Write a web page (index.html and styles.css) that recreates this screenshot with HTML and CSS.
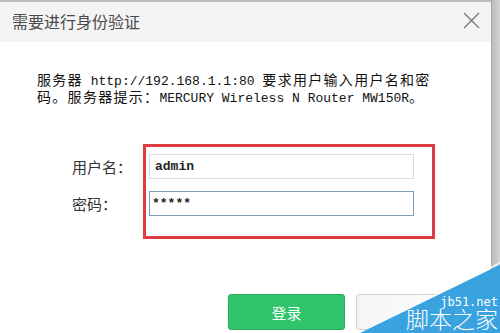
FILE: index.html
```html
<!DOCTYPE html>
<html lang="zh-CN">
<head>
<meta charset="utf-8">
<title>需要进行身份验证</title>
<link rel="stylesheet" href="styles.css">
</head>
<body>
<div class="dialog">
  <div class="header">
    <span class="title">需要进行身份验证</span>
    <svg class="close" width="17" height="17" viewBox="0 0 17 17"><path d="M1 1L16 16M16 1L1 16" stroke="#7a7a7a" stroke-width="1.4" fill="none"/></svg>
  </div>
  <p class="msg">服务器<span class="latin"> http://192.168.1.1:80 </span>要求用户输入用户名和密<br>码。服务器提示：<span class="latin">MERCURY Wireless N Router MW150R</span>。</p>
  <div class="form">
    <div class="labels">
      <div class="label">用户名：</div>
      <div class="label">密码：</div>
    </div>
    <div class="highlight">
      <div class="input">admin</div>
      <div class="input focus">*****</div>
    </div>
  </div>
  <div class="buttons">
    <div class="btn primary">登录</div>
    <div class="btn secondary"></div>
  </div>
</div>
<div class="edge"></div>
<div class="watermark">
  <div class="wm-glow"></div>
  <div class="wm-bg"></div>
  <span class="wm-url">jb51.net</span>
  <span class="wm-name">脚本之家</span>
</div>
</body>
</html>
```
FILE: styles.css
```css
html, body {
  margin: 0;
  padding: 0;
}
body {
  width: 500px;
  height: 333px;
  overflow: hidden;
  position: relative;
  display: flex;
  background: #c6c6c6;
  font-family: "Noto Sans CJK SC", sans-serif;
}
.dialog {
  width: 491px;
  flex: none;
  background: #ffffff;
  border-top: 2px solid #bdbdbd;
  display: flex;
  flex-direction: column;
}
.edge {
  flex: 1;
  border-left: 1px solid #a9a9a9;
  background: linear-gradient(to right, #bcbcbc, #d4d4d4);
}
.header {
  height: 40px;
  background: #f4f4f4;
  display: flex;
  align-items: center;
  justify-content: space-between;
  padding: 0 11px 0 12px;
}
.title {
  font-size: 16px;
  color: #4a4a4a;
  line-height: 20px;
  margin-top: -3px;
}
.close {
  margin-top: -3px;
}
.msg {
  margin: 30px 0 0 37px;
  font-family: "Noto Sans CJK SC", monospace;
  font-size: 14px;
  line-height: 14px;
  letter-spacing: 1.3px;
  color: #111;
}
.latin {
  font-family: "Liberation Mono", monospace;
  font-size: 13px;
  letter-spacing: 0;
}
.form {
  display: flex;
  margin-top: 38px;
  padding-left: 72px;
}
.labels {
  width: 71px;
  padding-top: 10px;
  display: flex;
  flex-direction: column;
  gap: 12px;
}
.label {
  height: 25px;
  line-height: 25px;
  font-size: 15px;
  color: #333;
}
.highlight {
  width: 292px;
  height: 95px;
  box-sizing: border-box;
  border: 3px solid #dc3b40;
  padding: 7px 0 0 3px;
  display: flex;
  flex-direction: column;
  gap: 12px;
}
.input {
  width: 265px;
  height: 25px;
  box-sizing: border-box;
  border: 1px solid #dcdcdc;
  padding-left: 5px;
  font-family: "Liberation Mono", monospace;
  font-size: 13px;
  font-weight: bold;
  line-height: 23px;
  color: #222;
}
.input.focus {
  border-color: #7f9dbd;
  padding-left: 2px;
}
.buttons {
  display: flex;
  justify-content: flex-end;
  gap: 11px;
  padding-right: 18px;
  margin-top: 55px;
}
.btn {
  width: 117px;
  height: 36px;
  box-sizing: border-box;
  border-radius: 3px;
  display: flex;
  align-items: center;
  justify-content: center;
  font-size: 15px;
}
.primary {
  background: #31c56b;
  border: 1px solid #27a95a;
  color: #ffffff;
}
.secondary {
  background: linear-gradient(to right, #f5f5f5, #ffffff);
  border: 1px solid #cfcfcf;
}
.watermark {
  position: absolute;
  left: 360px;
  top: 262px;
  width: 140px;
  height: 71px;
}
.wm-glow {
  position: absolute;
  inset: 0;
  background: rgba(255,255,255,0.85);
  clip-path: polygon(0 100%, 100% 0%, 100% 2%, 8% 100%);
}
.wm-bg {
  position: absolute;
  inset: 0;
  background: #3aa2df;
  clip-path: polygon(0 100%, 100% 4%, 100% 100%);
}
.wm-url {
  position: absolute;
  right: 2px;
  top: 34px;
  font-family: "DejaVu Sans Mono", monospace;
  font-size: 12px;
  line-height: 13px;
  color: #ffffff;
}
.wm-name {
  position: absolute;
  right: 2px;
  top: 45px;
  font-size: 23px;
  line-height: 23px;
  font-weight: 300;
  color: #ffffff;
}
```
